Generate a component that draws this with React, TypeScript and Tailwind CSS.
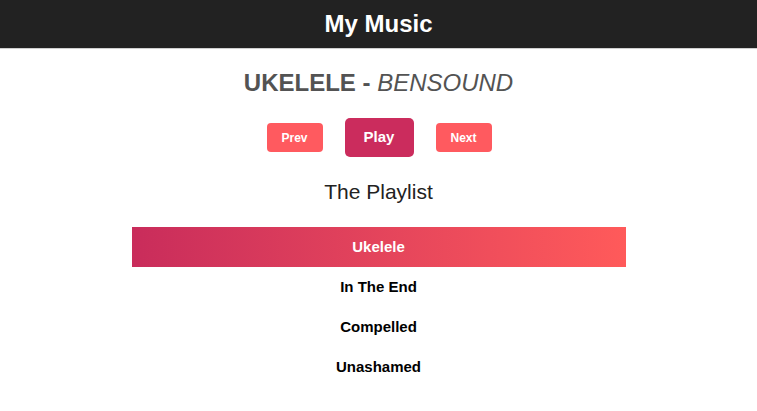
import React from "react";

export default function App() {
  const songs = ["Ukelele", "In The End", "Compelled", "Unashamed"];
  return (
    <div className="min-h-[411px] bg-white" style={{ fontFamily: '"Liberation Sans", Arial, sans-serif' }}>
      <header className="h-[49px] bg-[#222222] border-b border-[#cfcfcf] flex items-center justify-center">
        <h1 className="text-white text-[24px] font-bold leading-none">My Music</h1>
      </header>
      <div className="flex flex-col items-center">
        <h2 className="mt-[20px] text-[24px] leading-[28px] text-[#535353] font-bold">
          UKELELE - <span className="italic font-normal">BENSOUND</span>
        </h2>
        <div className="mt-[21px] flex items-center gap-[22px] pl-[1px]">
          <button className="w-[56px] h-[29px] rounded-[4px] bg-[#ff5a5f] text-white text-[12px] font-bold">Prev</button>
          <button className="w-[69px] h-[39px] rounded-[5px] bg-[#cb2c5d] text-white text-[15px] font-bold">Play</button>
          <button className="w-[56px] h-[29px] rounded-[4px] bg-[#ff5a5f] text-white text-[12px] font-bold">Next</button>
        </div>
        <h3 className="mt-[23px] text-[21px] leading-[24px] text-[#222]">The Playlist</h3>
        <ul className="mt-[23px] w-[494px]">
          {songs.map((s, i) => (
            <li
              key={s}
              className={
                i === 0
                  ? "h-[40px] flex items-center justify-center text-[15px] font-bold text-white bg-gradient-to-r from-[#c92c5b] to-[#ff5a5a]"
                  : "h-[40px] flex items-center justify-center text-[15px] font-bold text-black"
              }
            >
              {s}
            </li>
          ))}
        </ul>
      </div>
    </div>
  );
}
